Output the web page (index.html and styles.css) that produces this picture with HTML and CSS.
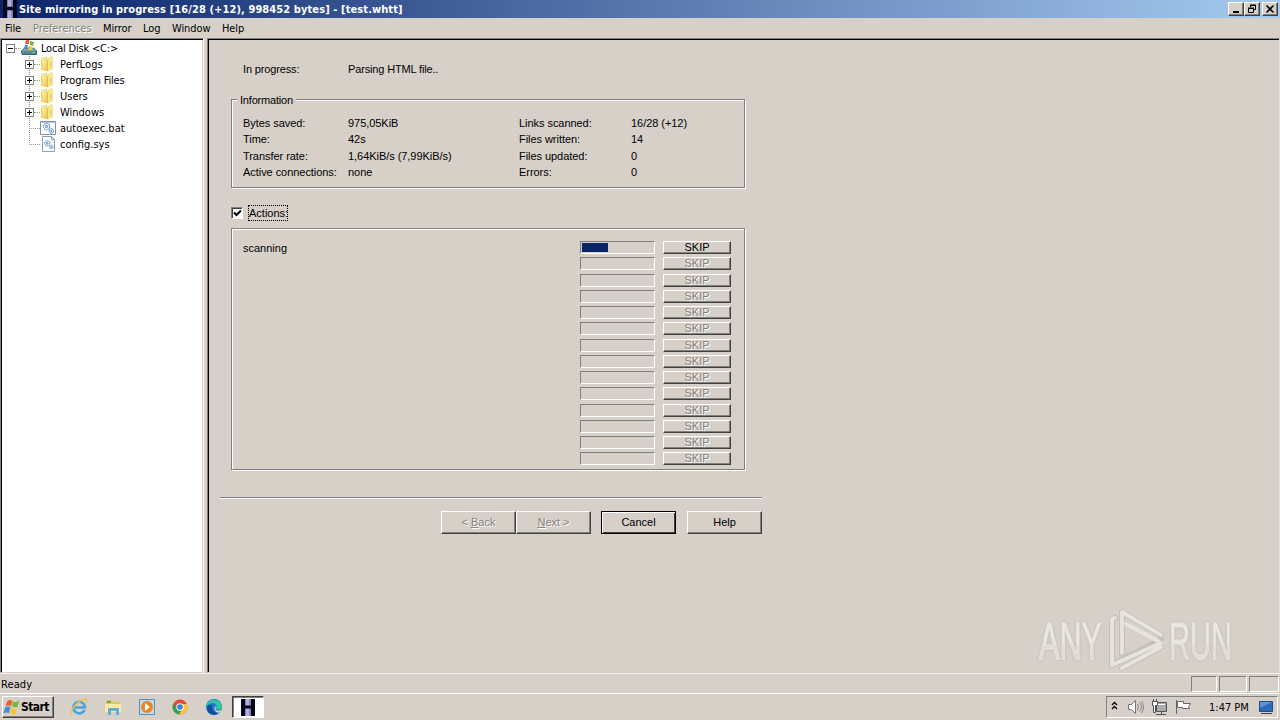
FILE: index.html
```html
<!DOCTYPE html>
<html lang="en">
<head>
<meta charset="utf-8">
<title>Site mirroring in progress</title>
<link rel="stylesheet" href="styles.css">
</head>
<body>
<svg class="defs" width="0" height="0">
  <defs>
    <linearGradient id="fold" x2="1" y2="1"><stop offset="0" stop-color="#fbf3a8"/><stop offset="1" stop-color="#e6c655"/></linearGradient>
    <symbol id="logo" viewBox="0 0 16 16"><path fill="#8583b4" d="M1 0h14v16H1z"/><path fill="#b0aedb" d="M6 0h3v16H6z"/><path fill="#05051a" d="M1 0h4v6h6V0h4v16h-4V9H5v7H1z"/></symbol>
    <symbol id="folder" viewBox="0 0 16 16"><path fill="#e9cd66" d="M1 2l6-1v14l-6-1z"/><path fill="url(#fold)" d="M2 2l6 1v12l-6-2z"/><path fill="#f7e68c" d="M7 3l4-3 2 1v12l-6 3z"/><path stroke="#d5b44c" stroke-width=".8" d="M7.500 4v11M11 6v6"/></symbol>
    <symbol id="gears" viewBox="0 0 16 16"><g fill="#e3f0fb" stroke="#417cae"><circle cx="6.500" cy="6.500" r="3.300" stroke-dasharray="1.500 .6"/><circle cx="6.500" cy="6.500" r="1"/><circle cx="11.300" cy="11" r="2.300" stroke-dasharray="1.300 .5"/><circle cx="11.300" cy="11" r=".5"/></g></symbol>
    <symbol id="flag" viewBox="0 0 16 16"><path fill="#e8622b" d="M4 2q2-2 5 0L7.500 7Q5 5 2.500 7z"/><path fill="#72b83c" d="M9.500 2.500q3 1 6-1l-2 6q-3 1-5-1z"/><path fill="#3b8fd4" d="M2 8q3-2 5 0l-1.500 5.500Q4 12 .5 13.500z"/><path fill="#f6c534" d="M8 8q2 2 5 1l-1.500 5.500q-3 1-5-1z"/></symbol>
  </defs>
</svg>

<header class="titlebar">
  <svg class="app-icon" width="16" height="18" viewBox="0 0 16 16" preserveAspectRatio="none"><use href="#logo"/></svg>
  <span class="title">Site mirroring in progress [16/28 (+12), 998452 bytes] - [test.whtt]</span>
  <div class="controls">
    <span class="ctl"><svg width="12" height="10"><path fill="#000" d="M3 7h6v2H3z"/></svg></span>
    <span class="ctl"><svg width="12" height="10"><path fill="none" stroke="#000" d="M4.500 3V1.500h5v4H8M4 1h6M2.500 4.500h5v4h-5zM2 4h6"/></svg></span>
    <span class="ctl close"><svg width="12" height="10"><path stroke="#000" stroke-width="1.600" d="M2.500 1.500l7 7M9.500 1.500l-7 7"/></svg></span>
  </div>
</header>
<nav class="menu"><span class="m-file">File</span><span class="m-pref">Preferences</span><span class="m-mirror">Mirror</span><span class="m-log">Log</span><span class="m-window">Window</span><span>Help</span></nav>

<main class="work">
  <aside class="tree">
    <div class="node root"><i class="box"></i><i class="dots short"></i>
      <svg class="ico" width="16" height="16"><path fill="#7fa3ac" stroke="#355f70" d="M.5 11l3-3h9l3 3v3.500H1z"/><path fill="#5d8697" d="M1 11h14v3H1z"/><path fill="#51e264" d="M11 12h3v1h-3z"/><path fill="#e8622b" d="M5 0h3v4H4z"/><path fill="#72b83c" d="M9 1l4 1-1 4-3-1z"/><path fill="#3b8fd4" d="M4 5l3 0-1 4H3z"/><path fill="#f6c534" d="M8 6l4 1-1 3H7z"/></svg>
      <span class="t-root">Local Disk &lt;C:&gt;</span></div>
    <div class="node"><i class="box plus"></i><i class="dots"></i><svg class="ico" width="16" height="16"><use href="#folder"/></svg><span class="t-perf">PerfLogs</span></div>
    <div class="node"><i class="box plus"></i><i class="dots"></i><svg class="ico" width="16" height="16"><use href="#folder"/></svg><span class="t-prog">Program Files</span></div>
    <div class="node"><i class="box plus"></i><i class="dots"></i><svg class="ico" width="16" height="16"><use href="#folder"/></svg><span>Users</span></div>
    <div class="node"><i class="box plus"></i><i class="dots"></i><svg class="ico" width="16" height="16"><use href="#folder"/></svg><span>Windows</span></div>
    <div class="node leaf"><i class="dots long"></i><svg class="ico" width="16" height="16"><path fill="#fff" stroke="#8194aa" d="M.5 1.500h15v13H.5z"/><path fill="#b8cadf" d="M1 2h14v1H1z"/><use href="#gears"/></svg><span>autoexec.bat</span></div>
    <div class="node leaf last"><i class="dots long"></i><svg class="ico" width="16" height="16"><path fill="#fff" stroke="#8ca0b5" d="M2.500.5h9l3 3v12h-12z"/><path fill="none" stroke="#8ca0b5" d="M11.500.5v3h3"/><use href="#gears" x="2" y="2" width="13" height="13"/></svg><span>config.sys</span></div>
  </aside>

  <section class="pane">
    <div class="dialog">
      <div class="progress-line"><span class="c1">In progress:</span><span class="s-parse">Parsing HTML file..</span></div>
      <section class="group info">
        <h2 class="legend">Information</h2>
        <dl class="facts">
          <dt>Bytes saved:</dt><dd>975,05KiB</dd><dt>Links scanned:</dt><dd>16/28 (+12)</dd>
          <dt>Time:</dt><dd>42s</dd><dt>Files written:</dt><dd>14</dd>
          <dt>Transfer rate:</dt><dd>1,64KiB/s (7,99KiB/s)</dd><dt>Files updated:</dt><dd>0</dd>
          <dt>Active connections:</dt><dd>none</dd><dt>Errors:</dt><dd>0</dd>
        </dl>
      </section>
      <div class="check"><span class="tick"><svg width="9" height="9"><path fill="none" stroke="#000" stroke-width="2" d="M1 3.500l2.500 2.500L8 1.500"/></svg></span><span class="focus">Actions:</span></div>
      <section class="group actions">
        <div class="row"><span class="what">scanning</span><span class="bar"><i class="fill"></i></span><span class="btn skip on">SKIP</span></div>
        <div class="row"><span class="what"></span><span class="bar"></span><span class="btn skip">SKIP</span></div>
        <div class="row"><span class="what"></span><span class="bar"></span><span class="btn skip">SKIP</span></div>
        <div class="row"><span class="what"></span><span class="bar"></span><span class="btn skip">SKIP</span></div>
        <div class="row"><span class="what"></span><span class="bar"></span><span class="btn skip">SKIP</span></div>
        <div class="row"><span class="what"></span><span class="bar"></span><span class="btn skip">SKIP</span></div>
        <div class="row"><span class="what"></span><span class="bar"></span><span class="btn skip">SKIP</span></div>
        <div class="row"><span class="what"></span><span class="bar"></span><span class="btn skip">SKIP</span></div>
        <div class="row"><span class="what"></span><span class="bar"></span><span class="btn skip">SKIP</span></div>
        <div class="row"><span class="what"></span><span class="bar"></span><span class="btn skip">SKIP</span></div>
        <div class="row"><span class="what"></span><span class="bar"></span><span class="btn skip">SKIP</span></div>
        <div class="row"><span class="what"></span><span class="bar"></span><span class="btn skip">SKIP</span></div>
        <div class="row"><span class="what"></span><span class="bar"></span><span class="btn skip">SKIP</span></div>
        <div class="row"><span class="what"></span><span class="bar"></span><span class="btn skip">SKIP</span></div>
      </section>
      <div class="rule"></div>
      <div class="buttons"><span class="btn big off">&lt;&nbsp;<u>B</u>ack</span><span class="btn big off next"><u>N</u>ext&nbsp;&gt;</span><span class="btn big default">Cancel</span><span class="btn big help">Help</span></div>
    </div>
    <svg class="watermark" width="230" height="80" viewBox="1030 600 230 80">
      <defs><linearGradient id="wm" x2="0" y2="1"><stop offset=".5" stop-color="#ebe8e4"/><stop offset=".6" stop-color="#e0dbd6"/></linearGradient></defs>
      <g class="wm-text" fill="url(#wm)"><text x="1039" y="659" textLength="63" lengthAdjust="spacingAndGlyphs">ANY</text><text x="1169" y="659" textLength="63" lengthAdjust="spacingAndGlyphs">RUN</text></g>
      <g fill="none" stroke-linecap="round" stroke-linejoin="round"><path class="wm-edge" d="M1115 618q-3 0-3 3v44l49-25.500M1122 653V612l39 23M1122 668l39-21"/><path class="wm-line" d="M1115 618q-3 0-3 3v44l49-22M1122 653V612l39 23M1126 624l32 17M1122 668l39-21"/></g>
    </svg>
  </section>
</main>

<footer class="status"><span class="ready">Ready</span><i class="cell"></i><i class="cell c27"></i><i class="cell c30"></i></footer>

<div class="taskbar">
  <div class="start"><svg width="17" height="17" viewBox="0 0 16 16"><use href="#flag"/></svg><span>Start</span></div>
  <div class="quick">
    <svg width="18" height="18" viewBox="0 0 18 18"><path fill="none" stroke="#45a6e0" stroke-width="2.600" d="M14.500 12A5.800 5.800 0 1 1 15 9.500H5"/><path fill="none" stroke="#efc352" stroke-width="1.400" d="M2 16C-1 13 8 2 15 1q3 0 1 4"/></svg>
    <svg width="18" height="18" viewBox="0 0 18 18"><path fill="#e5c66a" d="M2 2h6l1 2h7v10H2z"/><path fill="#f9e9a3" d="M1 6h16v8H1z"/><path fill="#68acd0" d="M4 10h11v7h-3v-4H7v4H4z"/><path fill="#58ad67" d="M3 3h4v2H3z"/></svg>
    <svg width="18" height="18" viewBox="0 0 18 18"><path fill="#bddcf1" stroke="#5b8eb5" d="M1.500 1.500h15v15h-15z"/><circle cx="9" cy="9" r="6" fill="#ef861b"/><path fill="#fff" d="M7 5l5 4-5 4z"/></svg>
    <svg width="18" height="18" viewBox="0 0 18 18"><circle cx="9" cy="9" r="7.500" fill="#e74735"/><path fill="#37a155" d="M2.500 5.200A7.500 7.500 0 0 0 8 16.400L11 11 7 12z"/><path fill="#f7c938" d="M16 6a7.500 7.500 0 0 1-8 10.400L12 10V6z"/><circle cx="9" cy="9" r="3.700" fill="#fff"/><circle cx="9" cy="9" r="2.800" fill="#397fe3"/></svg>
    <svg width="18" height="18" viewBox="0 0 18 18"><circle cx="9" cy="9" r="8" fill="#167bd0"/><path fill="#35c6a0" d="M2 6a8 8 0 0 1 15 3q-1 4-6 2 2-5-3-6-4 0-6 3z"/><path fill="#0c4e9b" d="M2 10Q3 6 7 7q-1 6 5 8l3-1Q8 20 3 14z"/><path fill="#d5d0c9" d="M10 8q2 3 0 3 3 3 6 1l1 1-4 2Q8 13 10 8z"/></svg>
  </div>
  <div class="task"><svg width="16" height="17" viewBox="0 0 16 16" preserveAspectRatio="none"><use href="#logo"/></svg></div>
  <div class="tray">
    <svg width="166" height="21" viewBox="1108 697 166 21" fill="none" stroke="#000">
      <path stroke-width="1.300" d="M1113 705l2.500-2.500 2.500 2.500M1113 709l2.500-2.500 2.500 2.500"/>
      <path fill="#fff" stroke="#777" d="M1129.500 704.500h3l4-4v13l-4-4h-3z"/><path stroke="#888" d="M1138.500 704q2 3 0 6M1140.500 702.500q4 4.500 0 9M1142.500 701q4 6 0 12"/>
      <path fill="#aaa" stroke="#555" d="M1157.500 702.500h10v9h-10zM1157 714.500h10M1162.500 711v3"/><path stroke="#fff" d="M1159 704.500h7"/><path fill="#fff" stroke="#555" d="M1153.500 701.500h5v4h-2v7h-2v-7h-1zM1154.500 699v3M1157.500 699v3"/>
      <path fill="#fff" stroke="#666" d="M1177.500 700v14M1178.500 701.500h6v2h7l-2 3 1 2h-7v-1h-5z"/>
      <path fill="#2c69bb" stroke="#234b80" d="M1260.500 701.500h13v10h-13z"/><path fill="#5c93d2" stroke="none" d="M1261 702h12l-12 6z"/><path stroke="#444" d="M1262 713.500h11"/>
    </svg>
    <span class="clock">1:47 PM</span>
  </div>
</div>
</body>
</html>
```
FILE: styles.css
```css
* { box-sizing: border-box; }
body { margin: 0; width: 1280px; height: 720px; overflow: hidden; display: flex; flex-direction: column; background: #d6d0c9; color: #000; font: 11px "DejaVu Sans Condensed", "DejaVu Sans", sans-serif; font-stretch: condensed; white-space: nowrap; }
i { font-style: normal; }
svg { display: block; flex: none; }
.defs { position: absolute; }

.titlebar { height: 18px; flex: none; display: flex; align-items: center; padding: 0 2px; background: linear-gradient(90deg, #0a246a, #a6caf0); color: #fff; }
.title { font-weight: bold; margin-left: 1px; flex: 1; letter-spacing: .095px; }
.controls { display: flex; }
.ctl { width: 16px; height: 14px; display: flex; justify-content: center; padding-top: 1px; background: #d6d0c9; border: 1px solid; border-color: #fff #404040 #404040 #fff; box-shadow: inset -1px -1px #808080; }
.close { margin-left: 2px; }

.menu { height: 20px; flex: none; display: flex; align-items: center; padding-left: 5px; }
.menu span { letter-spacing: -.1px; }
.m-file { width: 28px; }
.menu .m-pref { width: 70px; color: #85817b; text-shadow: 1px 1px #fff; letter-spacing: .05px; }
.m-mirror { width: 40px; }
.m-log { width: 29px; }
.m-window { width: 50px; }

.work { height: 635px; flex: none; display: flex; }
.tree { width: 204px; margin-right: 3px; background: #fff; border: 1px solid; border-color: #808080 #fff #d6d0c9 #808080; box-shadow: inset 1px 1px #000, inset -1px 0 #d6d0c9; padding: 1px 0 0 5px; }
.node { height: 16px; display: flex; align-items: center; padding-left: 19px; background: repeating-linear-gradient(#999 0 1px, #fff 1px 2px) 23px 0 / 1px 16px no-repeat; }
.node.root { padding-left: 0; background: none; }
.node.last { background-size: 1px 8px; }
.node.leaf { padding-left: 23px; }
.box { width: 9px; height: 9px; border: 1px solid #808080; background: linear-gradient(#000, #000) center / 5px 1px no-repeat; flex: none; }
.plus { background: linear-gradient(#000, #000) center / 5px 1px no-repeat, linear-gradient(#000, #000) center / 1px 5px no-repeat, #fff; box-shadow: 0 0 0 1px #fff; }
.dots { width: 6px; border-top: 1px dotted #999; }
.long { width: 11px; }
.ico { margin-right: 4px; }
.t-root { letter-spacing: -.2px; }
.t-prog { letter-spacing: -.15px; }
.t-perf { letter-spacing: .1px; }

.pane { flex: 1; position: relative; border: 1px solid; border-color: #808080 #e4e0dc #d6d0c9 #808080; box-shadow: inset 1px 1px #000; padding: 22px 0 0 12px; font-family: "Liberation Sans", Arial, sans-serif; font-size: 11px; }
.dialog { width: 542px; }
.progress-line { height: 16px; display: flex; align-items: center; padding-left: 23px; letter-spacing: -.15px; }
.c1 { width: 105px; }
.group { width: 514px; margin-left: 11px; border: 1px solid #808080; box-shadow: 1px 1px #fff, inset 1px 1px #fff; }
.info { height: 89px; margin-top: 22px; }
.legend { font: inherit; margin: -6px 0 0 5px; padding: 0 3px; width: 59px; line-height: 13px; background: #d6d0c9; letter-spacing: -.2px; }
.facts { margin: 8px 0 0 11px; display: grid; grid-template-columns: 105px 171px 112px 1fr; grid-auto-rows: 16.25px; line-height: 16px; letter-spacing: -.05px; }
.facts dd { margin: 0; }
.check { height: 16px; display: flex; align-items: center; margin: 17px 0 0 11px; }
.tick { width: 12px; height: 12px; background: #fff; border: 1px solid; border-color: #808080 #fff #fff #808080; box-shadow: inset 1px 1px #404040; padding: 1px; }
.focus { margin-left: 5px; height: 16px; width: 40px; line-height: 14px; border: 1px dotted #000; }
.actions { height: 242px; margin-top: 7px; padding: 12.100px 0 0 11px; }
.row { height: 16.25px; display: flex; align-items: flex-start; }
.what { width: 337px; line-height: 14px; }
.bar { width: 75px; height: 13px; border: 1px solid; border-color: #808080 #fff #fff #808080; padding: 1px; margin-right: 8px; }
.fill { display: block; width: 26px; height: 9px; background: #0a246a; }
.btn { display: flex; align-items: center; justify-content: center; border: 1px solid; border-color: #fff #404040 #404040 #fff; box-shadow: inset -1px -1px #808080; background: #d6d0c9; }
.skip { width: 68px; height: 13px; line-height: 10px; padding-bottom: 1px; color: #85817b; text-shadow: 1px 1px #fff; }
.on { color: #000; text-shadow: none; }
.rule { height: 2px; margin-top: 27px; background: linear-gradient(#808080 50%, #fff 50%); }
.buttons { display: flex; margin: 12px 0 0 221px; }
.big { width: 75px; height: 23px; padding-bottom: 2px; }
.off { color: #85817b; text-shadow: 1px 1px #fff; }
.default { margin-left: 10px; border-color: #000; box-shadow: inset 1px 1px #fff, inset -1px -1px #404040; }
.help { margin-left: 11px; }
.watermark { position: absolute; left: 822px; top: 561px; overflow: visible; }
.wm-text { font: 52px "Liberation Sans", Arial, sans-serif; stroke: #e6e2de; stroke-width: 1.400; filter: drop-shadow(0 0 1px #b9b4ae); }
.wm-edge { stroke: #c5c0ba; stroke-width: 6; }
.wm-line { stroke: #e7e4e0; stroke-width: 3.800; }

.status { height: 20px; flex: none; display: flex; align-items: flex-start; border-top: 1px solid #f4f2f0; padding: 2px 1px 0; gap: 2px; }
.ready { flex: 1; line-height: 17px; letter-spacing: .1px; }
.cell { width: 26px; height: 16px; border: 1px solid; border-color: #808080 #fff #fff #808080; }
.c27 { width: 28px; }
.c30 { width: 30px; }

.taskbar { height: 27px; flex: none; border-top: 1px solid #fff; display: flex; align-items: flex-start; padding: 2px 2px 0; }
.start { width: 52px; height: 22px; display: flex; align-items: center; gap: 1px; font-weight: bold; font-size: 12px; letter-spacing: -.55px; border: 1px solid; border-color: #fff #404040 #404040 #fff; box-shadow: inset -1px -1px #808080; }
.quick { display: flex; gap: 15.750px; margin: 2px 0 0 16px; }
.task { width: 32px; height: 22px; margin-left: 9px; background: #fff; border: 1px solid; border-color: #404040 #fff #fff #404040; box-shadow: inset 1px 1px #808080; display: flex; align-items: center; justify-content: center; }
.tray { width: 172px; height: 22px; margin-left: auto; position: relative; border: 1px solid; border-color: #808080 #fff #fff #808080; }
.clock { position: absolute; left: 102px; top: 4px; line-height: 13px; }
```
